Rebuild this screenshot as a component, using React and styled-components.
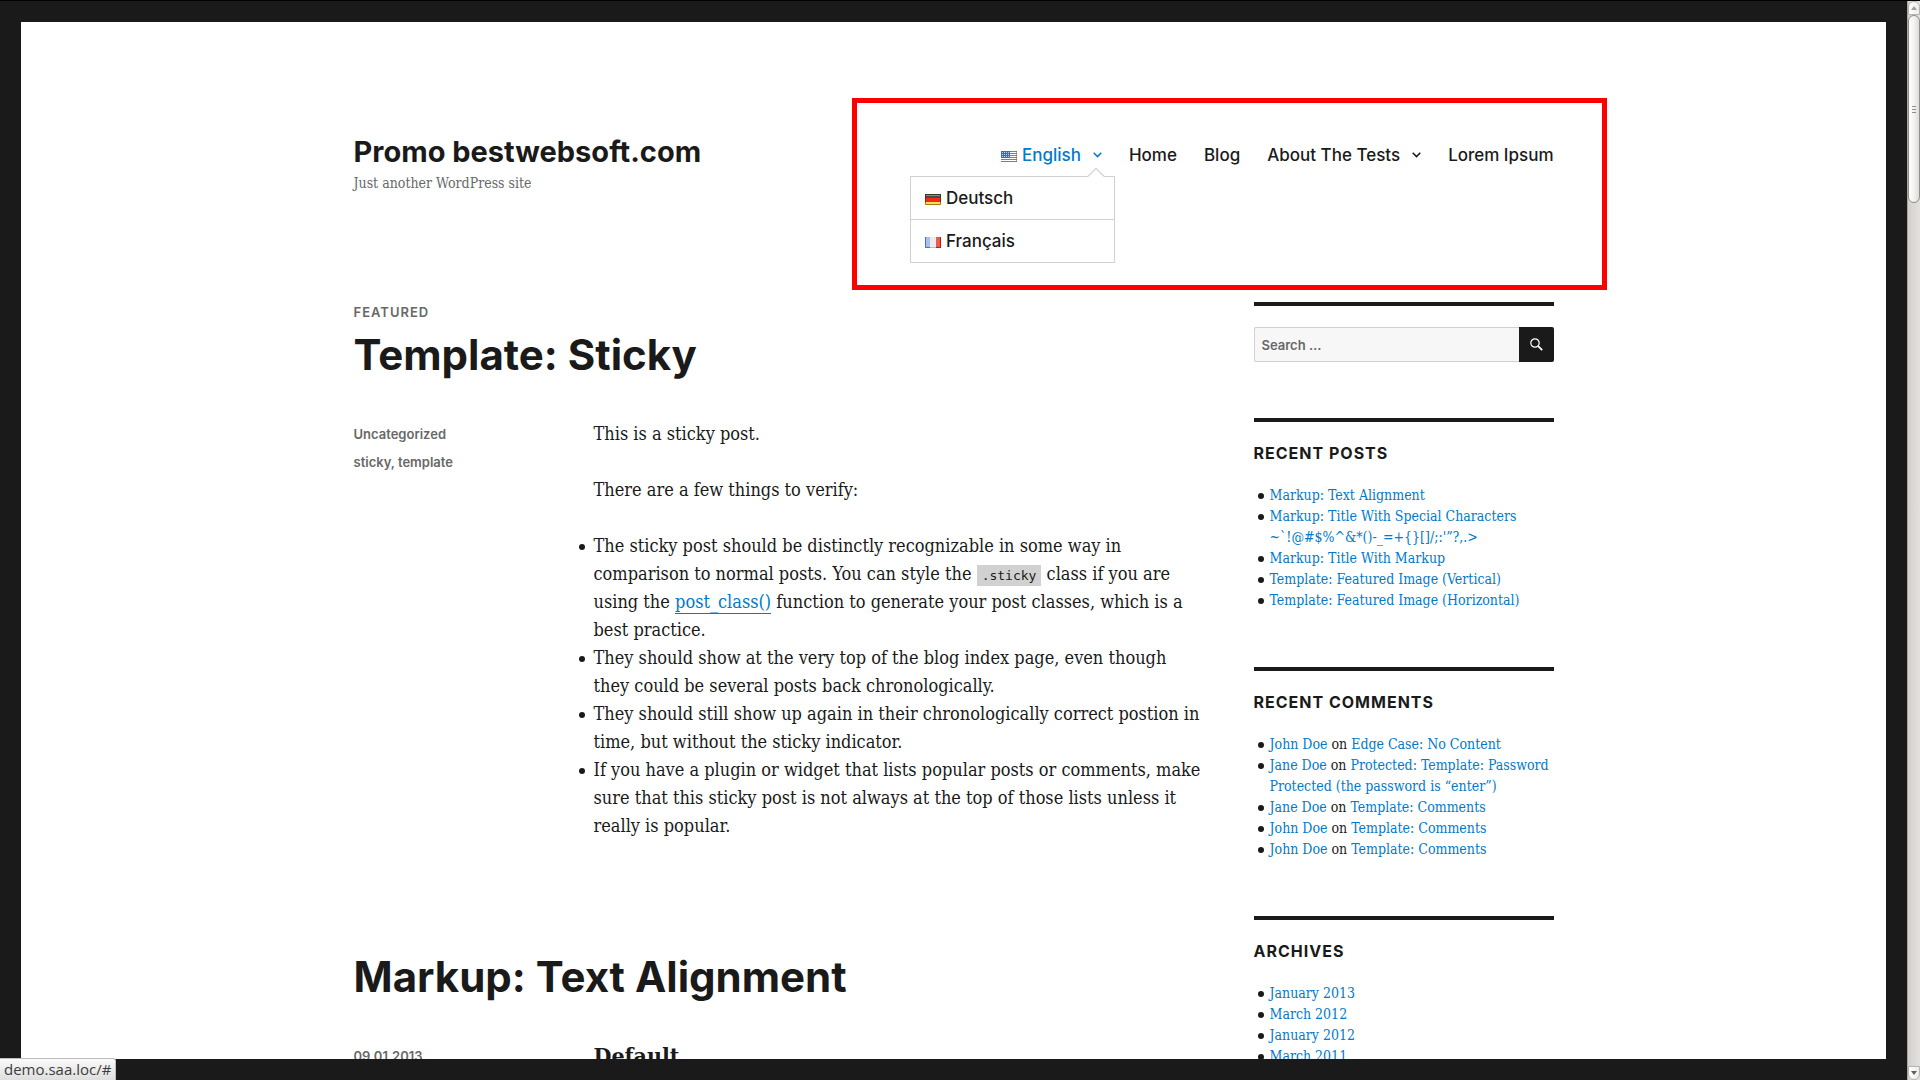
import React from 'react';
import styled, { createGlobalStyle } from 'styled-components';

const ink = '#1a1a1a';
const link = '#007acc';
const muted = '#686868';
const line = '#d1d1d1';
const sans = 'Inter, "Open Sans", sans-serif';
const serif = '"DejaVu Serif Condensed", "DejaVu Serif", serif';

const GlobalStyle = createGlobalStyle`
  *, *::before, *::after { box-sizing: border-box; }
  body { margin: 0; background: ${ink}; color: ${ink}; font-family: ${serif}; font-size: 18px; line-height: 28px; }
  h1, h2, h3, p, ul { margin: 0; padding: 0; }
  ul { list-style: none; }
  a { color: inherit; text-decoration: none; }
`;

const Window = styled.div`
  display: flex;
  height: 100vh;
  position: relative;
  border-top: 1px solid #000;
  overflow: hidden;
`;

const Page = styled.div`
  flex: 1;
  min-width: 0;
  border: 21px solid ${ink};
  background: #fff;
  overflow: hidden;
`;

const Inner = styled.div`
  max-width: 1200px;
  margin: 0 auto;
`;

const Header = styled.header`
  position: relative;
  display: flex;
  justify-content: space-between;
  align-items: flex-start;
  padding: 112px 0 108px;
`;

const SiteTitle = styled.h1`
  font: 700 29px/35px ${sans};
`;

const Tagline = styled.p`
  margin-top: 4px;
  color: ${muted};
  font-size: 14px;
  line-height: 21px;
`;

const Menu = styled.ul`
  display: flex;
  gap: 27px;
  padding-top: 9px;
  font: 500 17px/24px ${sans};
`;

const MenuItem = styled.li`
  position: relative;
`;

const MenuLink = styled.a`
  display: flex;
  align-items: center;
  color: ${p => (p.$active ? link : ink)};
`;

const Chevron = styled.svg`
  width: 9px;
  height: 6px;
  margin-left: 12px;
  fill: none;
  stroke: currentColor;
  stroke-width: 1.5;
`;

const FlagIcon = styled.svg`
  width: 16px;
  height: 11px;
  margin: 2px 5px 0 0;
`;

const Submenu = styled.ul`
  position: absolute;
  top: 33px;
  right: -13px;
  width: 205px;
  border: 1px solid ${line};
  background: #fff;

  li + li { border-top: 1px solid ${line}; }
  a { padding: 9px 14px; }
`;

const Notch = styled.svg`
  position: absolute;
  top: 24px;
  right: -3px;
  width: 18px;
  height: 10px;
`;

const Highlight = styled.div`
  position: absolute;
  top: 76px;
  right: -53px;
  width: 755px;
  height: 192px;
  border: 5px solid #f00;
  pointer-events: none;
`;

const Columns = styled.div`
  display: flex;
  gap: 50px;
`;

const Main = styled.main`
  flex: 1;
  min-width: 0;
  display: flex;
  flex-direction: column;
  gap: 86px;
`;

const Featured = styled.div`
  margin-bottom: 9px;
  color: ${muted};
  font: 600 13px/21px ${sans};
  letter-spacing: 1px;
  text-transform: uppercase;
`;

const PostTitle = styled.h2`
  font: 700 42px/46px ${sans};
`;

const PostGrid = styled.div`
  display: grid;
  grid-template-columns: 240px 1fr;
  margin-top: 42px;
`;

const Meta = styled.div`
  color: ${muted};
  font: 600 13px/28px ${sans};
`;

const bullet = gap => `
  li::before {
    content: '';
    display: inline-block;
    width: 6px;
    height: 6px;
    margin: 0 ${gap}px 0 -${gap + 6}px;
    border-radius: 50%;
    background: ${ink};
    vertical-align: middle;
  }
`;

const Content = styled.div`
  p, ul { margin-bottom: 28px; }
  h3 { font-size: 23px; line-height: 28px; }
  ${bullet(9)}
`;

const Code = styled.code`
  padding: 3px 5px;
  background: ${line};
  font: 13px/16px "DejaVu Sans Mono", monospace;
`;

const TextLink = styled.a`
  padding-bottom: 1px;
  border-bottom: 1px solid ${link};
  color: ${link};
`;

const Sidebar = styled.aside`
  width: 300px;
  display: flex;
  flex-direction: column;
  gap: 56px;
`;

const Widget = styled.section`
  padding-top: 21px;
  border-top: 4px solid ${ink};
`;

const WidgetTitle = styled.h2`
  margin-bottom: 22px;
  font: 700 16px/20px ${sans};
  letter-spacing: 1px;
  text-transform: uppercase;
`;

const WidgetList = styled.ul`
  font-size: 14px;
  line-height: 21px;

  && { padding-left: 16px; }
  a { color: ${link}; }
  ${bullet(6)}
`;

const SearchForm = styled.form`
  display: flex;
  height: 35px;
`;

const SearchInput = styled.input`
  flex: 1;
  min-width: 0;
  padding: 0 7px;
  border: 1px solid ${line};
  border-right: 0;
  border-radius: 2px 0 0 2px;
  background: #f7f7f7;
  color: ${muted};
  font: 600 13px/20px ${sans};

  &::placeholder { color: ${muted}; opacity: 1; }
`;

const SearchButton = styled.button`
  display: grid;
  place-items: center;
  width: 35px;
  padding: 0;
  border: 0;
  border-radius: 0 2px 2px 0;
  background: ${ink};
  color: #fff;

  svg { width: 13px; height: 13px; fill: none; stroke: currentColor; }
`;

const Scrollbar = styled.div`
  width: 13px;
  display: flex;
  flex-direction: column;
  border-left: 1px solid #a8a5a2;
  background: linear-gradient(90deg, #d3d0cd, #e3e0de);
`;

const ScrollButton = styled.button`
  display: grid;
  place-items: center;
  height: 14px;
  margin-top: ${p => (p.$end ? 'auto' : '0')};
  padding: 0;
  border: 1px solid #b5b2af;
  border-radius: ${p => (p.$end ? '0 0 7px 7px' : '7px 7px 0 0')};
  background: linear-gradient(90deg, #fff, #ececea);

  svg { width: 6px; height: 4px; fill: ${p => (p.$end ? '#5f5f5f' : '#a09e9c')}; }
`;

const Thumb = styled.div`
  display: grid;
  place-content: center;
  gap: 2px;
  height: 188px;
  border: 1px solid #918f8c;
  border-radius: 6px;
  background: linear-gradient(90deg, #fff, #f3f2f0 50%, #dedbd8);

  i { width: 4px; height: 1px; background: #8f8c89; }
`;

const Status = styled.div`
  position: absolute;
  left: 0;
  bottom: 0;
  padding: 0 4px;
  border-top: 1px solid #bdbdbd;
  border-right: 1px solid #bdbdbd;
  border-radius: 0 3px 0 0;
  background: linear-gradient(#fafafa, #dedede);
  color: #3c3c3c;
  font: 15px/21px "Open Sans", sans-serif;
`;

const Down = () => (
  <Chevron viewBox="0 0 9 6" aria-hidden="true"><path d="M0.7 0.8 4.5 4.6 8.3 0.8" /></Chevron>
);

function Flag({ country }) {
  return (
    <FlagIcon viewBox="0 0 16 11" aria-hidden="true">
      {country === 'us' && (
        <>
          <rect width="16" height="11" fill="#fff" />
          {[0, 2, 4, 6, 8, 10].map(y => (
            <rect key={y} y={y} width="16" height="1" fill={y === 0 || y === 10 ? '#c5625a' : '#f0524c'} />
          ))}
          <rect width="9" height="7" fill="#3f63d8" />
          {[1, 3, 5].map(y => [1, 3, 5, 7].map(x => (
            <rect key={x + '-' + y} x={x} y={y} width="1" height="1" fill="#c3d0fa" />
          )))}
          <rect x="15" width="1" height="11" fill="#b5544a" opacity=".6" />
        </>
      )}
      {country === 'de' && (
        <>
          <rect width="16" height="4" fill="#4a4a4a" />
          <rect y="4" width="16" height="4" fill="#f02a20" />
          <rect y="8" width="16" height="3" fill="#fbe04a" />
          <rect x="1" y="1" width="14" height="1" fill="#8a8a8a" />
          <path d="M.5 4V.5H15.5V4" fill="none" stroke="#2f3a1c" />
          <path d="M.5 4V8M15.5 4V8" stroke="#a01810" />
          <path d="M.5 8V10.5H15.5V8" fill="none" stroke="#a5781c" />
        </>
      )}
      {country === 'fr' && (
        <>
          <rect width="5" height="11" fill="#a9bfe8" />
          <rect x="5" width="6" height="11" fill="#ececec" />
          <rect x="11" width="5" height="11" fill="#ee5a50" />
          <path d="M.5 0V10.5H5" fill="none" stroke="#4a70c4" />
          <path d="M5 10.5H11" stroke="#bdbdbd" />
          <path d="M11 10.5H15.5V0" fill="none" stroke="#c81414" />
        </>
      )}
    </FlagIcon>
  );
}

const posts = [
  'Markup: Text Alignment',
  'Markup: Title With Special Characters ~`!@#$%^&*()-_=+{}[]/;:\'”?,.>',
  'Markup: Title With Markup',
  'Template: Featured Image (Vertical)',
  'Template: Featured Image (Horizontal)',
];

const comments = [
  ['John Doe', 'Edge Case: No Content'],
  ['Jane Doe', 'Protected: Template: Password Protected (the password is “enter”)'],
  ['Jane Doe', 'Template: Comments'],
  ['John Doe', 'Template: Comments'],
  ['John Doe', 'Template: Comments'],
];

const archives = ['January 2013', 'March 2012', 'January 2012', 'March 2011'];

export default function App() {
  return (
    <Window>
      <GlobalStyle />
      <Page>
        <Inner>
          <Header>
            <div>
              <SiteTitle><a href="#">Promo bestwebsoft.com</a></SiteTitle>
              <Tagline>Just another WordPress site</Tagline>
            </div>
            <nav aria-label="Primary">
              <Menu>
                <MenuItem>
                  <MenuLink href="#" $active><Flag country="us" />English<Down /></MenuLink>
                  <Submenu>
                    <li><MenuLink href="#"><Flag country="de" />Deutsch</MenuLink></li>
                    <li><MenuLink href="#"><Flag country="fr" />Français</MenuLink></li>
                  </Submenu>
                  <Notch viewBox="0 0 18 10" aria-hidden="true">
                    <path d="M0.5 9.5 9 1.5 17.5 9.5V10H0.5Z" fill="#fff" />
                    <path d="M0 9.5H0.8L9 1.3 17.2 9.5H18" fill="none" stroke={line} strokeWidth="1.2" />
                  </Notch>
                </MenuItem>
                <MenuItem><MenuLink href="#">Home</MenuLink></MenuItem>
                <MenuItem><MenuLink href="#">Blog</MenuLink></MenuItem>
                <MenuItem><MenuLink href="#">About The Tests<Down /></MenuLink></MenuItem>
                <MenuItem><MenuLink href="#">Lorem Ipsum</MenuLink></MenuItem>
              </Menu>
            </nav>
            <Highlight />
          </Header>

          <Columns>
            <Main>
              <article>
                <Featured>Featured</Featured>
                <PostTitle><a href="#">Template: Sticky</a></PostTitle>
                <PostGrid>
                  <Meta>
                    <div><a href="#">Uncategorized</a></div>
                    <div><a href="#">sticky</a>, <a href="#">template</a></div>
                  </Meta>
                  <Content>
                    <p>This is a sticky post.</p>
                    <p>There are a few things to verify:</p>
                    <ul>
                      <li>
                        The sticky post should be distinctly recognizable in some way in comparison to normal posts. You
                        can style the <Code>.sticky</Code> class if you are using the{' '}
                        <TextLink href="#">post_class()</TextLink> function to generate your post classes, which is a
                        best practice.
                      </li>
                      <li>
                        They should show at the very top of the blog index page, even though they could be several posts
                        back chronologically.
                      </li>
                      <li>
                        They should still show up again in their chronologically correct postion in time, but without the
                        sticky indicator.
                      </li>
                      <li>
                        If you have a plugin or widget that lists popular posts or comments, make sure that this sticky
                        post is not always at the top of those lists unless it really is popular.
                      </li>
                    </ul>
                  </Content>
                </PostGrid>
              </article>
              <article>
                <PostTitle><a href="#">Markup: Text Alignment</a></PostTitle>
                <PostGrid>
                  <Meta><a href="#">09.01.2013</a></Meta>
                  <Content><h3>Default</h3></Content>
                </PostGrid>
              </article>
            </Main>

            <Sidebar>
              <Widget>
                <SearchForm role="search">
                  <SearchInput type="search" placeholder="Search …" aria-label="Search for:" />
                  <SearchButton type="submit" aria-label="Search">
                    <svg viewBox="0 0 13 13">
                      <circle cx="5" cy="5" r="4.2" strokeWidth="1.2" />
                      <path d="M8.2 8.2 12.2 12.2" strokeWidth="1.8" />
                    </svg>
                  </SearchButton>
                </SearchForm>
              </Widget>
              <Widget>
                <WidgetTitle>Recent Posts</WidgetTitle>
                <WidgetList>
                  {posts.map(t => <li key={t}><a href="#">{t}</a></li>)}
                </WidgetList>
              </Widget>
              <Widget>
                <WidgetTitle>Recent Comments</WidgetTitle>
                <WidgetList>
                  {comments.map(([who, where], i) => (
                    <li key={i}><a href="#">{who}</a> on <a href="#">{where}</a></li>
                  ))}
                </WidgetList>
              </Widget>
              <Widget>
                <WidgetTitle>Archives</WidgetTitle>
                <WidgetList>
                  {archives.map(t => <li key={t}><a href="#">{t}</a></li>)}
                </WidgetList>
              </Widget>
            </Sidebar>
          </Columns>
        </Inner>
      </Page>
      <Scrollbar>
        <ScrollButton type="button" aria-label="Scroll up"><svg viewBox="0 0 6 4"><path d="M0 4 3 0 6 4Z" /></svg></ScrollButton>
        <Thumb><i /><i /><i /></Thumb>
        <ScrollButton type="button" aria-label="Scroll down" $end><svg viewBox="0 0 6 4"><path d="M0 0 3 4 6 0Z" /></svg></ScrollButton>
      </Scrollbar>
      <Status>demo.saa.loc/#</Status>
    </Window>
  );
}
